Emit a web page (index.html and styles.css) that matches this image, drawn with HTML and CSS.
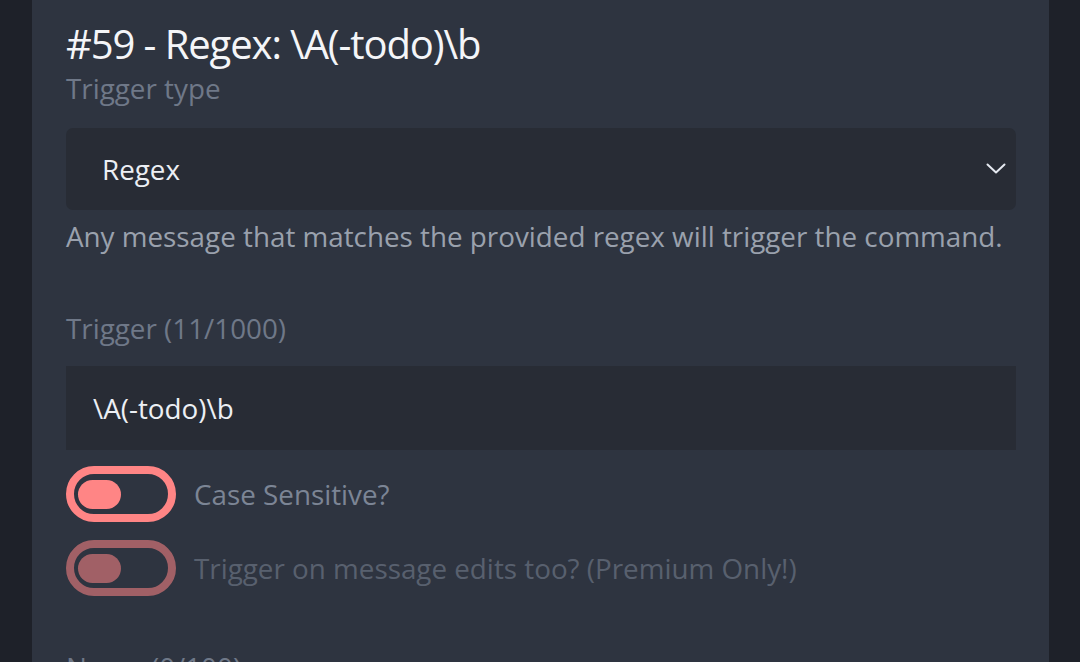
FILE: index.html
```html
<!DOCTYPE html>
<html lang="en">
<head>
<meta charset="utf-8">
<title>Custom command #59</title>
<link rel="stylesheet" href="styles.css">
</head>
<body>
<div class="page">
  <div class="gutter"></div>
  <main class="card">
    <h1 class="title">#59 - Regex: \A(-todo)\b</h1>
    <label class="label label-first">Trigger type</label>
    <div class="select">
      <span class="select-value">Regex</span>
      <svg class="chevron" width="20" height="12" viewBox="0 0 20 12" aria-hidden="true">
        <path d="M1.5 1.5 L10 9.5 L18.5 1.5" fill="none" stroke="#e5e9f0" stroke-width="2" stroke-linecap="round" stroke-linejoin="round"/>
      </svg>
    </div>
    <p class="help">Any message that matches the provided regex will trigger the command.</p>

    <label class="label label-trigger">Trigger (11/1000)</label>
    <div class="input">\A(-todo)\b</div>

    <div class="toggle-row toggle-first">
      <span class="toggle"><span class="knob"></span></span>
      <span class="toggle-text">Case Sensitive?</span>
    </div>
    <div class="toggle-row toggle-second disabled">
      <span class="toggle"><span class="knob"></span></span>
      <span class="toggle-text">Trigger on message edits too? (Premium Only!)</span>
    </div>

    <label class="label label-name">Name (0/100)</label>
  </main>
  <div class="gutter-right"></div>
</div>
</body>
</html>
```

FILE: styles.css
```css
* { box-sizing: border-box; }

html, body {
  margin: 0;
  padding: 0;
  height: 100%;
  overflow: hidden;
  background: #1e2129;
  font-family: "Open Sans", "Noto Sans", sans-serif;
}

.page {
  display: flex;
  height: 662px;
}

.gutter { width: 32px; flex: none; }
.gutter-right { flex: 1; }

.card {
  width: 1017px;
  flex: none;
  background: #2e3440;
  padding: 20px 33px 0 34px;
  display: flex;
  flex-direction: column;
  overflow: hidden;
}

.card > * { flex-shrink: 0; }

.title {
  margin: 0;
  font-weight: 400;
  font-size: 40px;
  line-height: 48px;
  letter-spacing: -1.1px;
  color: #f4f5f8;
}

.label {
  display: block;
  font-size: 27.8px;
  line-height: 38px;
  color: #6f7888;
}

.label-first { margin-top: 1px; }
.label-trigger { margin-top: 54px; }
.label-name { margin-top: 52px; }

.select {
  margin-top: 21px;
  height: 82px;
  border-radius: 7px;
  background: #282c35;
  display: flex;
  align-items: center;
  justify-content: space-between;
  padding: 0 10px 0 36px;
}

.select-value {
  font-size: 27.8px;
  color: #eceff4;
}

.chevron { display: block; }

.help {
  margin: 7px 0 0;
  font-size: 27.8px;
  line-height: 38px;
  color: #9aa1ad;
}

.input {
  margin-top: 19px;
  height: 84px;
  background: #282c35;
  display: flex;
  align-items: center;
  padding-left: 27px;
  font-size: 27.8px;
  color: #eceff4;
}

.toggle-row {
  display: flex;
  align-items: center;
  gap: 18px;
}

.toggle-first { margin-top: 16px; }
.toggle-second { margin-top: 18px; }

.toggle {
  width: 110px;
  height: 56px;
  border: 8px solid #ff8585;
  border-radius: 28px;
  display: flex;
  align-items: center;
  padding-left: 4px;
  flex: none;
}

.knob {
  width: 43px;
  height: 29px;
  border-radius: 15px;
  background: #ff8585;
}

.toggle-text {
  font-size: 27.8px;
  color: #7c8595;
}

.disabled { opacity: 0.55; }
```
